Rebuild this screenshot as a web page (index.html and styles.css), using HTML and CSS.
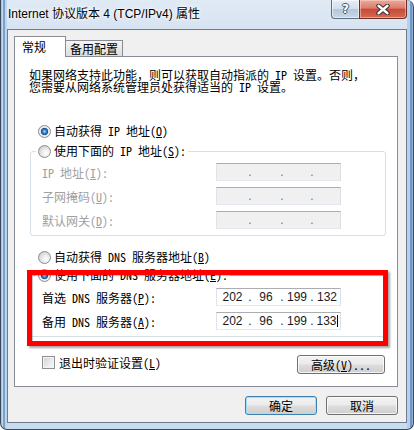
FILE: index.html
```html
<!DOCTYPE html>
<html lang="zh-CN">
<head>
<meta charset="utf-8">
<title>Internet 协议版本 4 (TCP/IPv4) 属性</title>
<link rel="stylesheet" href="styles.css">
</head>
<body>
<div class="window">
  <div class="titlebar">
    <span class="title">Internet 协议版本 4 (TCP/IPv4) 属性</span>
    <div class="caption">
      <div class="cap help">?</div>
      <div class="cap close">
        <svg width="14" height="11" viewBox="0 0 14 11">
          <path d="M2.5 1.8 L11.5 9.2 M11.5 1.8 L2.5 9.2" stroke="#3b2a2a" stroke-width="4.4" stroke-linecap="round"/>
          <path d="M2.5 1.8 L11.5 9.2 M11.5 1.8 L2.5 9.2" stroke="#ffffff" stroke-width="2.4" stroke-linecap="round"/>
        </svg>
      </div>
    </div>
  </div>
  <div class="client">
    <div class="tabs">
      <div class="tab active">常规</div>
      <div class="tab">备用配置</div>
    </div>
    <div class="panel">
      <p class="desc">如果网络支持此功能，则可以获取自动指派的 IP 设置。否则，<br>您需要从网络系统管理员处获得适当的 IP 设置。</p>

      <div class="opt opt-first"><span class="radio checked"></span><span>自动获得 IP 地址(<u>O</u>)</span></div>

      <div class="group group-ip">
        <div class="opt legend"><span class="radio"></span><span>使用下面的 IP 地址(<u>S</u>):</span></div>
        <div class="fields fields-ip">
          <div class="field disabled">
            <span class="lbl">IP 地址(<u>I</u>):</span>
            <div class="ip"><span class="s1"></span><i>.</i><span class="s2"></span><i>.</i><span class="s3"></span><i>.</i><span class="s4"></span></div>
          </div>
          <div class="field disabled">
            <span class="lbl">子网掩码(<u>U</u>):</span>
            <div class="ip"><span class="s1"></span><i>.</i><span class="s2"></span><i>.</i><span class="s3"></span><i>.</i><span class="s4"></span></div>
          </div>
          <div class="field disabled">
            <span class="lbl">默认网关(<u>D</u>):</span>
            <div class="ip"><span class="s1"></span><i>.</i><span class="s2"></span><i>.</i><span class="s3"></span><i>.</i><span class="s4"></span></div>
          </div>
        </div>
      </div>

      <div class="opt opt-dns"><span class="radio"></span><span>自动获得 DNS 服务器地址(<u>B</u>)</span></div>

      <div class="group group-dns">
        <div class="opt legend"><span class="radio checked"></span><span>使用下面的 DNS 服务器地址(<u>E</u>):</span></div>
        <div class="fields fields-dns">
          <div class="field">
            <span class="lbl">首选 DNS 服务器(<u>P</u>):</span>
            <div class="ip"><span class="s1">202</span><i>.</i><span class="s2">96</span><i>.</i><span class="s3">199</span><i>.</i><span class="s4">132</span></div>
          </div>
          <div class="field">
            <span class="lbl">备用 DNS 服务器(<u>A</u>):</span>
            <div class="ip"><span class="s1">202</span><i>.</i><span class="s2">96</span><i>.</i><span class="s3">199</span><i>.</i><span class="s4">133<b class="caret"></b></span></div>
          </div>
        </div>
      </div>

      <div class="bottom-row">
        <div class="check-row"><span class="checkbox"></span><span>退出时验证设置(<u>L</u>)</span></div>
        <button class="btn btn-adv">高级(<u>V</u>)...</button>
      </div>

      <div class="red-mark"></div>
    </div>
    <div class="actions">
      <button class="btn btn-default">确定</button>
      <button class="btn">取消</button>
    </div>
  </div>
</div>
</body>
</html>
```

FILE: styles.css
```css
* { box-sizing: border-box; }

html, body {
  margin: 0;
  padding: 0;
  width: 414px;
  height: 430px;
  overflow: hidden;
  background: #ffffff;
}

body {
  font-family: "Noto Sans Mono CJK SC", "Noto Sans CJK SC", "Noto Sans", sans-serif;
  font-size: 12px;
  color: #000;
}

.window {
  width: 414px;
  height: 430px;
  border: 1px solid #3a4a5e;
  border-top: none;
  border-radius: 0 7px 7px 7px;
  padding: 0 6px 6px 6px;
  display: flex;
  flex-direction: column;
  background:
    linear-gradient(90deg, #a7c4e3 0 1px, #c4daf0 1px 2px, #7aa0cc 2px 4px, #bcd4ed 4px 6px, transparent 6px),
    linear-gradient(270deg, #8fb2da 0 1px, #6f98c8 1px 3px, #b7d0ea 3px 6px, transparent 6px),
    linear-gradient(180deg, #e0eaf5 0%, #d2e0f0 10%, #c3d7ec 60%, #c9ddf1 100%);
}

/* ---------- title bar ---------- */
.titlebar {
  height: 29px;
  display: flex;
  align-items: flex-start;
  flex: none;
}

.title {
  font-family: "Liberation Sans", "Noto Sans CJK SC", sans-serif;
  font-size: 12px;
  line-height: 17px;
  padding: 6px 0 0 1px;
  color: #000;
  text-shadow: 0 0 6px #ffffff, 0 0 3px #ffffff;
}

.caption {
  margin-left: auto;
  display: flex;
  height: 19px;
}

.cap {
  height: 19px;
  display: flex;
  align-items: center;
  justify-content: center;
  border: 1px solid #5d6d82;
  border-top: none;
}

.help {
  width: 28px;
  border-right: none;
  border-radius: 0 0 0 4px;
  background: linear-gradient(180deg, #e6edf5 0%, #d3dfec 48%, #b6c7db 52%, #c9d7e6 100%);
  box-shadow: inset 0 0 0 1px rgba(255,255,255,0.55);
  color: #fff;
  font-family: "DejaVu Sans", sans-serif;
  font-weight: bold;
  font-size: 12px;
  line-height: 1;
  padding-bottom: 1px;
  text-shadow: 1px 0 #46546a, -1px 0 #46546a, 0 1px #46546a, 0 -1px #46546a;
}

.close {
  width: 48px;
  border-color: #6b2f28;
  border-radius: 0 0 4px 0;
  background: linear-gradient(180deg, #eaaa9c 0%, #dc7d6c 45%, #c84a38 52%, #d46a52 100%);
  box-shadow: inset 0 0 0 1px rgba(255,220,210,0.5);
}

/* ---------- client ---------- */
.client {
  flex: none;
  height: 394px;
  border: 1px solid #6f7b89;
  background: #f0f0f0;
  padding: 6px 8px 7px 6px;
  display: flex;
  flex-direction: column;
}

.tabs {
  height: 20px;
  display: flex;
  align-items: flex-end;
  flex: none;
  font-family: "Noto Sans CJK SC", sans-serif;
}

.tab {
  border: 1px solid #898c95;
  border-bottom: none;
  font-size: 12px;
  line-height: 15px;
}

.tab.active {
  width: 52px;
  height: 21px;
  margin-bottom: -1px;
  position: relative;
  z-index: 1;
  background: #ffffff;
  padding: 2px 0 0 7px;
}

.tab:not(.active) {
  width: 57px;
  height: 16px;
  border-left: none;
  background: linear-gradient(180deg, #f4f4f4 0%, #e9e9e9 50%, #dcdcdc 100%);
  padding: 0 0 0 4px;
  line-height: 16px;
}

.panel {
  position: relative;
  height: 331px;
  flex: none;
  background: #ffffff;
  border: 1px solid #898c95;
  padding: 12px 0 0 0;
}

.desc {
  margin: 0 0 0 14px;
  line-height: 12px;
  font-size: 12px;
  white-space: nowrap;
}

u { text-decoration: underline; text-underline-offset: 1px; }

.opt {
  display: flex;
  align-items: center;
  height: 16px;
  gap: 3px;
  white-space: nowrap;
  line-height: 16px;
}

.opt-first { margin: 30px 0 0 23px; }
.opt-dns { margin: 13px 0 0 23px; }

.radio {
  width: 13px;
  height: 13px;
  flex: none;
  border-radius: 50%;
  border: 1px solid #8b8d90;
  background: radial-gradient(circle at 65% 65%, #ffffff 0%, #eeeeee 35%, #cfcfcf 80%, #bdbdbd 100%);
}

.radio.checked {
  background: radial-gradient(circle at 50% 50%, #a9def9 0, #3f8fd6 1.6px, #1d5c9e 3px, #1a4f8a 3.4px, #e2e2e2 3.9px, #f2f2f2 5px, #d3d3d3 6px);
}

.group {
  margin-left: 15px;
  width: 356px;
  border: 1px solid #d5dfe5;
  border-radius: 3px;
  padding: 0 0 6px 0;
}

.group-ip { margin-top: 12px; }
.group-dns { margin-top: 10px; }

.legend {
  margin: -9px 0 0 5px;
  padding: 0 2px;
  width: fit-content;
  background: #ffffff;
}

.fields {
  display: flex;
  flex-direction: column;
  gap: 6px;
  padding-left: 11px;
}

.fields-ip { margin-top: 4px; }
.fields-dns { margin-top: 5px; }

.field {
  display: grid;
  grid-template-columns: 174px 125px;
  align-items: center;
  height: 18px;
  white-space: nowrap;
}

.field.disabled .lbl { color: #a0a0a0; }

.ip {
  height: 18px;
  display: flex;
  align-items: center;
  border: 1px solid;
  border-color: #abadb3 #dbdfe6 #e3e9ef #e2e3ea;
  background: #ffffff;
  font-family: "Liberation Sans", sans-serif;
  font-size: 12px;
  color: #1a1a1a;
  line-height: 16px;
}

.field.disabled .ip { background: #f0f0f0; color: #6d6d6d; }

.ip span { text-align: center; display: block; }
.ip .s1 { width: 31px; }
.ip .s2 { width: 28px; }
.ip .s3 { width: 26px; }
.ip .s4 { width: 26px; }
.ip i {
  font-style: normal;
  width: 4px;
  text-align: center;
  display: block;
}

.caret {
  display: inline-block;
  width: 1px;
  height: 12px;
  background: #000;
  vertical-align: -2px;
}

.bottom-row {
  margin-top: 18px;
  height: 19px;
  display: flex;
  align-items: center;
  justify-content: space-between;
  padding: 0 12px 0 27px;
}

.check-row {
  display: flex;
  align-items: center;
  gap: 4px;
  height: 16px;
  margin-bottom: 5px;
  white-space: nowrap;
}

.checkbox {
  width: 13px;
  height: 13px;
  border: 1px solid #8e8f8f;
  background: linear-gradient(135deg, #cdd1d6 0%, #e6e8eb 50%, #fafafa 100%);
  box-shadow: inset 0 0 0 1px #f4f4f4;
}

.btn {
  font-family: "Noto Sans Mono CJK SC", "Noto Sans CJK SC", sans-serif;
  font-size: 12px;
  color: #000;
  height: 19px;
  line-height: 15px;
  padding: 0;
  border: 1px solid #707070;
  border-radius: 3px;
  background: linear-gradient(180deg, #f2f2f2 0%, #ebebeb 48%, #dddddd 52%, #cfcfcf 100%);
  box-shadow: inset 0 0 0 1px rgba(255,255,255,0.75);
  white-space: nowrap;
}

.btn-adv { width: 88px; }

.actions {
  margin-top: 9px;
  display: flex;
  justify-content: flex-end;
  gap: 9px;
}

.actions .btn { width: 72px; }

.btn-default {
  border-color: #3c7fb1;
  box-shadow: inset 0 0 0 1px #9fe0fb;
}

.red-mark {
  position: absolute;
  left: 12px;
  top: 213px;
  width: 361px;
  height: 76px;
  border: 5px solid #ff0000;
  box-shadow: 2px 2px 2px rgba(0,0,0,0.35), inset 1px 1px 1px rgba(0,0,0,0.25);
  pointer-events: none;
}
```
